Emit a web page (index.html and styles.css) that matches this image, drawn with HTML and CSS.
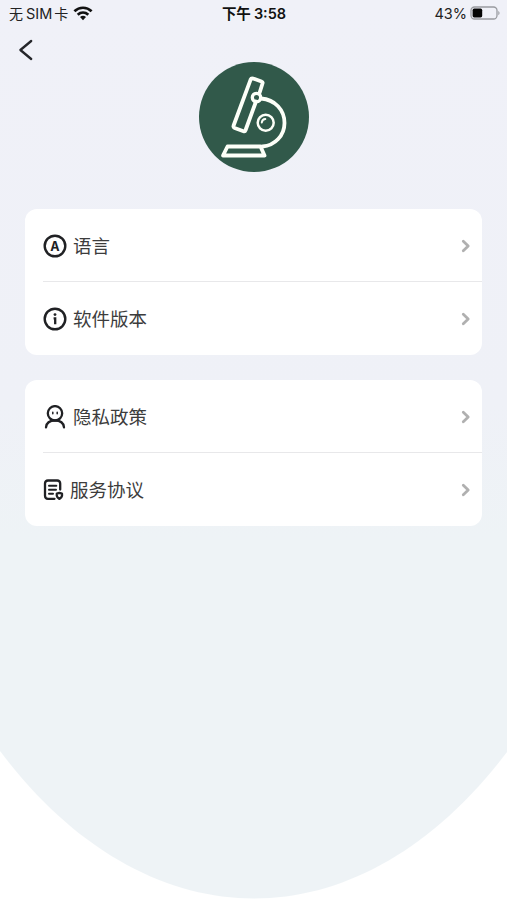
FILE: index.html
```html
<!DOCTYPE html>
<html lang="zh-CN">
<head>
    <meta charset="UTF-8">
    <meta name="viewport" content="width=device-width, initial-scale=1.0">
    <title>设置</title>
    <link rel="stylesheet" href="styles.css">
</head>
<body>
    <div class="page">
        <!-- Curved page background -->
        <svg class="page-bg" viewBox="0 0 507 900" preserveAspectRatio="none">
            <defs>
                <linearGradient id="bg" x1="0" y1="0" x2="0" y2="1">
                    <stop offset="0" stop-color="#f0f1f8"/>
                    <stop offset="0.45" stop-color="#eff1f7"/>
                    <stop offset="0.6" stop-color="#eef3f6"/>
                    <stop offset="1" stop-color="#eef3f6"/>
                </linearGradient>
            </defs>
            <path d="M0 0H507V752C432 851 342 898.500 254 898.500S75 851 0 751Z" fill="url(#bg)"/>
        </svg>

        <header class="status-bar">
            <div class="status-left">
                <span class="carrier">无<span class="sim">SIM</span>卡</span>
                <svg class="wifi" width="20" height="15" viewBox="0 0 20 15">
                    <g fill="none" stroke="#111" stroke-width="2.700">
                        <path d="M1.400 5.200C6.400 .600 13.600 .600 18.600 5.200"/>
                        <path d="M4.700 8.700C7.800 5.900 12.200 5.900 15.300 8.700"/>
                    </g>
                    <path d="M7 11Q10 8.700 13 11L10 14.200Z" fill="#111"/>
                </svg>
            </div>
            <div class="status-time">下午<span class="clock">3:58</span></div>
            <div class="status-right">
                <span>43%</span>
                <svg width="31" height="14" viewBox="0 0 31 14">
                    <rect x="1" y="1" width="26" height="12" rx="3.500" fill="none" stroke="#999ba0" stroke-width="1.300"/>
                    <rect x="2.600" y="2.600" width="9.600" height="8.800" rx="1.600" fill="#050505"/>
                    <path d="M28.300 4.700Q30.800 7 28.300 9.300Z" fill="#999ba0"/>
                </svg>
            </div>
        </header>

        <nav class="nav-bar">
            <svg class="back" width="16" height="22" viewBox="0 0 16 22">
                <path d="M13.200 2L2.400 11L13.200 20" fill="none" stroke="#25262a" stroke-width="2.300" stroke-linecap="round" stroke-linejoin="round"/>
            </svg>
        </nav>

        <!-- Microscope logo -->
        <div class="logo">
            <svg width="110" height="110" viewBox="0 0 110 110">
                <circle cx="55" cy="55" r="55" fill="#31594a"/>
                <g fill="none" stroke="#fdfff8" stroke-width="3.800" stroke-linejoin="round" stroke-linecap="round">
                    <path d="M60.500 31L63.500 21.500Q64 20 62.500 19.500L54 16.500Q52.300 16 51.600 17.600L34.600 63.500Q34 65.300 35.600 66L44.500 69.200Q46 69.700 46.600 68L57 39.500"/>
                    <circle cx="57.500" cy="35.500" r="4.200" stroke-width="3.300"/>
                    <path d="M62 36.500C76 37.500 85.500 48 85.500 61C85.500 73.500 76 83.500 63.500 84.500"/>
                    <circle cx="66.700" cy="60.800" r="8" stroke-width="2.500"/>
                    <path d="M62.800 60.500Q63.200 57.200 66.300 57" stroke-width="2"/>
                    <path d="M28.500 84.500H61.500L65.500 93.500H24Z"/>
                </g>
            </svg>
        </div>

        <main class="menu">
            <section class="card">
                <a class="row">
                    <svg width="24" height="24" viewBox="0 0 24 24">
                        <circle cx="12" cy="12" r="10.300" fill="none" stroke="#202124" stroke-width="2.400"/>
                        <text class="icon-letter" x="12" y="16.600" text-anchor="middle">A</text>
                    </svg>
                    <span class="label">语言</span>
                    <svg class="chevron" width="10" height="14" viewBox="0 0 10 14">
                        <path d="M2.300 2.300L7.200 7L2.300 11.700"/>
                    </svg>
                </a>
                <a class="row">
                    <svg width="24" height="24" viewBox="0 0 24 24">
                        <circle cx="12" cy="12" r="10.300" fill="none" stroke="#202124" stroke-width="2.400"/>
                        <circle cx="12" cy="7.600" r="1.400" fill="#202124"/>
                        <path d="M10.600 11.300H12.200V17.300" fill="none" stroke="#202124" stroke-width="2.300"/>
                    </svg>
                    <span class="label">软件版本</span>
                    <svg class="chevron" width="10" height="14" viewBox="0 0 10 14">
                        <path d="M2.300 2.300L7.200 7L2.300 11.700"/>
                    </svg>
                </a>
            </section>

            <section class="card">
                <a class="row">
                    <svg width="24" height="24" viewBox="0 0 24 24">
                        <g fill="none" stroke="#202124" stroke-width="2.300" stroke-linecap="round">
                            <circle cx="12" cy="8.300" r="7.200"/>
                            <path d="M3 22.300C3.500 17.700 7.200 15.500 12 15.500S20.500 17.700 21 22.300"/>
                            <path d="M9.800 7.300V8.700M14.200 7.300V8.700" stroke-width="1.500"/>
                        </g>
                    </svg>
                    <span class="label">隐私政策</span>
                    <svg class="chevron" width="10" height="14" viewBox="0 0 10 14">
                        <path d="M2.300 2.300L7.200 7L2.300 11.700"/>
                    </svg>
                </a>
                <a class="row">
                    <svg width="21" height="24" viewBox="0 0 21 24">
                        <g fill="none" stroke="#202124" stroke-width="2.300" stroke-linecap="round" stroke-linejoin="round">
                            <path d="M17.200 11.500V5.500Q17.200 2.500 14.200 2.500H5Q2 2.500 2 5.500V17.800Q2 20.800 5 20.800H11.500"/>
                            <path d="M6 7.800H13.300M6 11.800H13M6 15.800H10" stroke-width="2"/>
                            <path d="M16.400 14.900L19 15.600V17.800Q18.700 19.700 16.400 20.900Q14.100 19.700 13.800 17.800V15.600Z"/>
                        </g>
                    </svg>
                    <span class="label">服务协议</span>
                    <svg class="chevron" width="10" height="14" viewBox="0 0 10 14">
                        <path d="M2.300 2.300L7.200 7L2.300 11.700"/>
                    </svg>
                </a>
            </section>
        </main>
    </div>
</body>
</html>
```
FILE: styles.css
```css
* {
    box-sizing: border-box;
}
body {
    margin: 0;
    background: #fff;
    color: #3c3c3c;
    font-family: Inter, "Noto Sans CJK SC", sans-serif;
}
svg {
    display: block;
    flex-shrink: 0;
}
.page {
    position: relative;
    height: 900px;
    overflow: hidden;
}
.page-bg {
    position: absolute;
    inset: 0;
    width: 100%;
    height: 100%;
    z-index: -1;
}
.status-bar {
    display: grid;
    grid-template-columns: 1fr auto 1fr;
    align-items: center;
    height: 28px;
    padding: 0 6px 0 9px;
    font-size: 14.5px;
    line-height: 28px;
    color: #222;
}
.status-left,
.status-right {
    display: flex;
    align-items: center;
    gap: 5px;
}
.status-left svg {
    margin-top: -2px;
}
.status-right svg {
    margin-top: -2px;
}
.carrier {
    font-size: 14px;
}
.sim {
    margin: 0 2px 0 3px;
    font-size: 14.5px;
}
.status-time {
    padding-right: 2px;
    font-weight: 600;
    font-size: 14.5px;
    color: #111;
}
.clock {
    margin-left: 3px;
}
.status-right {
    justify-content: flex-end;
    gap: 3px;
}
.nav-bar {
    display: flex;
    height: 34px;
    padding: 11px 18px 0;
}
.logo {
    display: flex;
    justify-content: center;
}
.menu {
    display: flex;
    flex-direction: column;
    gap: 25px;
    padding: 37px 25px 0;
}
.card {
    height: 146px;
    padding-left: 18px;
    background: #fff;
    border-radius: 12px;
}
.row {
    display: flex;
    align-items: center;
    gap: 6px;
    height: 72px;
    padding: 1px 11px 0 0;
}
.row + .row {
    height: 74px;
    padding-top: 0;
    border-top: 1px solid #e8e8ea;
}
.label {
    flex: 1;
    font-size: 18.5px;
    line-height: 28px;
}
.icon-letter {
    font-family: Inter, sans-serif;
    font-size: 12.5px;
    font-weight: 700;
    fill: #202124;
}
.chevron path {
    fill: none;
    stroke: #b0b0b0;
    stroke-width: 2.8;
    stroke-linecap: round;
    stroke-linejoin: round;
}
```
